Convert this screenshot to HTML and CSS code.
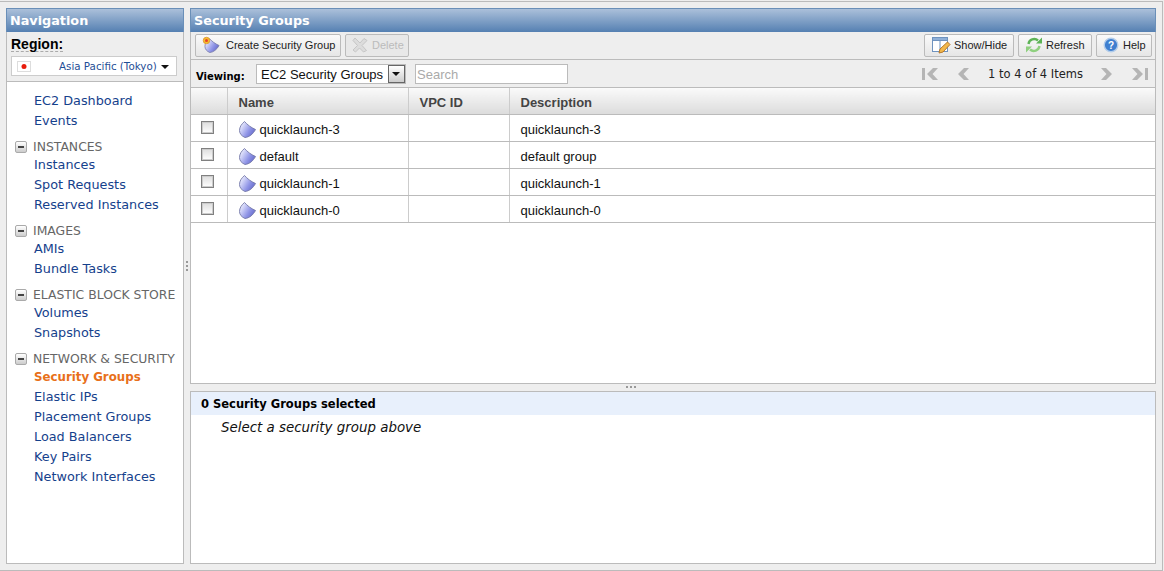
FILE: index.html
```html
<!DOCTYPE html>
<html lang="en">
<head>
<meta charset="utf-8">
<title>Security Groups</title>
<link rel="stylesheet" href="styles.css">
</head>
<body>
<svg class="defs" width="0" height="0" aria-hidden="true">
  <defs>
    <linearGradient id="sh" x1="0" y1=".2" x2="1" y2=".8">
      <stop offset="0" stop-color="#f4f5ff"/>
      <stop offset=".3" stop-color="#c3c6f4"/>
      <stop offset=".6" stop-color="#8f94e6"/>
      <stop offset="1" stop-color="#5d62c4"/>
    </linearGradient>
    <symbol id="shield" viewBox="0 0 17 17">
      <path d="M5.500 .5 C8 3.500 12 6.500 16.500 8.500 C14 13 10.500 16 6 16.500 C2.500 15 .5 12.500 .5 9.500 C.5 6 2.500 3 5.500 .5 Z" fill="url(#sh)" stroke="#7478a8" stroke-width=".9"/>
    </symbol>
  </defs>
</svg>
<div class="app">
  <aside class="nav">
    <h2 class="bar">Navigation</h2>
    <div class="region">
      <div class="region-label"><span>Region:</span></div>
      <div class="region-box">
        <svg class="flag" width="14" height="11" viewBox="0 0 14 11"><rect x=".5" y=".5" width="13" height="10" fill="#fff" stroke="#ddd"/><circle cx="7" cy="5.500" r="2.500" fill="#e81c0c"/></svg>
        <span class="region-name">Asia Pacific (Tokyo)</span>
        <span class="caret"></span>
      </div>
    </div>
    <div class="nav-list">
      <a class="nav-link">EC2 Dashboard</a>
      <a class="nav-link">Events</a>
      <div class="nav-head"><span class="minus"></span>INSTANCES</div>
      <a class="nav-link">Instances</a>
      <a class="nav-link">Spot Requests</a>
      <a class="nav-link">Reserved Instances</a>
      <div class="nav-head"><span class="minus"></span>IMAGES</div>
      <a class="nav-link">AMIs</a>
      <a class="nav-link">Bundle Tasks</a>
      <div class="nav-head"><span class="minus"></span>ELASTIC BLOCK STORE</div>
      <a class="nav-link">Volumes</a>
      <a class="nav-link">Snapshots</a>
      <div class="nav-head"><span class="minus"></span>NETWORK &amp; SECURITY</div>
      <a class="nav-link current">Security Groups</a>
      <a class="nav-link">Elastic IPs</a>
      <a class="nav-link">Placement Groups</a>
      <a class="nav-link">Load Balancers</a>
      <a class="nav-link">Key Pairs</a>
      <a class="nav-link">Network Interfaces</a>
    </div>
  </aside>
  <div class="vsplit"><span class="grip-v"></span></div>
  <main class="main">
    <h2 class="bar">Security Groups</h2>
    <div class="toolbar">
      <button class="btn create">
        <svg width="20" height="18" viewBox="0 0 20 18"><use href="#shield" x="3" y="2" width="16" height="15"/><circle cx="5.500" cy="4.500" r="3.200" fill="#f6c02c" stroke="#e09a35"/><circle cx="5.500" cy="4.500" r="1.500" fill="#e8402a"/></svg>
        Create Security Group
      </button>
      <button class="btn disabled">
        <svg width="16" height="16" viewBox="0 0 16 16"><path d="M3 1 L8 6 L12 1.500 L15 3.500 L10 8.500 L14.500 13.500 L11.500 15 L7.500 11 L3.500 15 L1 13 L5.500 8.500 L1 3.500 Z" fill="#dcdcdc" stroke="#c6c6c6"/></svg>
        Delete
      </button>
      <span class="spacer"></span>
      <button class="btn showhide">
        <svg width="20" height="18" viewBox="0 0 20 18"><rect x="1.500" y="1.500" width="15" height="14" fill="#fff" stroke="#6f93bf"/><rect x="1.500" y="1.500" width="15" height="3" fill="#8fb0d8" stroke="#6f93bf"/><path d="M9 4.500 V15.500" stroke="#6f93bf"/><path d="M8 17 L9 13 L16.500 6 L19 8.500 L12 16 Z" fill="#f2b84a" stroke="#b5772a"/></svg>
        Show/Hide
      </button>
      <button class="btn refresh">
        <svg width="18" height="18" viewBox="0 0 18 18"><path d="M3.500 8 A5.800 5.800 0 0 1 13 4.500" fill="none" stroke="#5db356" stroke-width="2.400"/><path d="M11 7.500 H17 V1.500 Z" fill="#5db356"/><path d="M14.500 10 A5.800 5.800 0 0 1 5 13.500" fill="none" stroke="#8fd07f" stroke-width="2.400"/><path d="M7 10.500 H1 V16.500 Z" fill="#8fd07f"/></svg>
        Refresh
      </button>
      <button class="btn help">
        <svg width="16" height="16" viewBox="0 0 16 16"><circle cx="8" cy="8" r="6.800" fill="#3f7fd0" stroke="#b3cdea" stroke-width="1.400"/><text x="8" y="11.500" class="qmark" text-anchor="middle">?</text></svg>
        Help
      </button>
    </div>
    <div class="filters">
      <label class="viewing">Viewing:</label>
      <div class="combo"><span class="combo-text">EC2 Security Groups</span><span class="combo-arrow"></span></div>
      <div class="search">Search</div>
      <span class="spacer"></span>
      <div class="pager">
        <svg width="18" height="14" viewBox="0 0 18 14"><rect x="1" y="1" width="3" height="12" fill="#b5b5b5"/><path d="M17 1 L12 1 L6 7 L12 13 L17 13 L11.500 7 Z" fill="#b5b5b5"/></svg>
        <svg class="pg-prev" width="13" height="14" viewBox="0 0 13 14"><path d="M12 1 L7 1 L1 7 L7 13 L12 13 L6.500 7 Z" fill="#b5b5b5"/></svg>
        <span class="pg-text">1 to 4 of 4 Items</span>
        <svg class="pg-next" width="13" height="14" viewBox="0 0 13 14"><path d="M1 1 L6 1 L12 7 L6 13 L1 13 L6.500 7 Z" fill="#b5b5b5"/></svg>
        <svg class="pg-last" width="18" height="14" viewBox="0 0 18 14"><path d="M1 1 L6 1 L12 7 L6 13 L1 13 L6.500 7 Z" fill="#b5b5b5"/><rect x="14" y="1" width="3" height="12" fill="#b5b5b5"/></svg>
      </div>
    </div>
    <div class="grid-wrap">
      <table class="grid">
        <colgroup><col class="c-check"><col class="c-name"><col class="c-vpc"><col></colgroup>
        <thead><tr><th></th><th>Name</th><th>VPC ID</th><th>Description</th></tr></thead>
        <tbody>
          <tr><td class="chk"><span class="box"></span></td><td><span class="cell-name"><svg class="sg" width="17" height="17"><use href="#shield"/></svg>quicklaunch-3</span></td><td></td><td>quicklaunch-3</td></tr>
          <tr><td class="chk"><span class="box"></span></td><td><span class="cell-name"><svg class="sg" width="17" height="17"><use href="#shield"/></svg>default</span></td><td></td><td>default group</td></tr>
          <tr><td class="chk"><span class="box"></span></td><td><span class="cell-name"><svg class="sg" width="17" height="17"><use href="#shield"/></svg>quicklaunch-1</span></td><td></td><td>quicklaunch-1</td></tr>
          <tr><td class="chk"><span class="box"></span></td><td><span class="cell-name"><svg class="sg" width="17" height="17"><use href="#shield"/></svg>quicklaunch-0</span></td><td></td><td>quicklaunch-0</td></tr>
        </tbody>
      </table>
    </div>
    <div class="hsplit"><span class="grip-h"></span></div>
    <section class="detail">
      <div class="detail-head">0 Security Groups selected</div>
      <div class="detail-body">Select a security group above</div>
    </section>
  </main>
</div>
</body>
</html>
```
FILE: styles.css
```css
* { box-sizing: border-box; }
html, body { margin: 0; height: 100%; }
body { background: #eee; overflow: hidden; font-family: "Liberation Sans", Arial, sans-serif; }
.defs { position: absolute; }
.app {
  width: 1163px;
  height: 570px;
  margin-top: 1px;
  border-top: 1px solid #bbb;
  border-bottom: 1px solid #bbb;
  border-right: 1px solid #bbb;
  padding: 6px;
  display: flex;
}
.bar {
  margin: 0;
  height: 24px;
  padding-left: 3px;
  font: bold 12.800px/23px "DejaVu Sans", Verdana, sans-serif;
  color: #fff;
  background: linear-gradient(#abc0da, #5580b2);
  border: 1px solid #6a8fb8;
  border-bottom: 0;
}
.nav { width: 178px; display: flex; flex-direction: column; flex: none; }
.region { height: 49px; border-left: 1px solid #bbb; border-right: 1px solid #bbb; padding: 5px 6px 0 4px; }
.region-label { font: bold 14px/15px "Liberation Sans", Arial, sans-serif; color: #000; height: 19px; }
.region-label span { display: inline-block; height: 15px; border-bottom: 1px dashed #aaa; }
.region-box {
  height: 20px; background: #fff; border: 1px solid #ccc; display: flex; align-items: center;
  padding-left: 5px; color: #1f4e96;
}
.region-name { margin-left: 28px; font: 10.300px "DejaVu Sans", Verdana, sans-serif; white-space: nowrap; }
.flag { flex: none; }
.caret { margin-left: 4px; border: 4px solid transparent; border-top-color: #111; border-bottom: 0; margin-top: 2px; }
.nav-list {
  flex: 1; background: #fff; border: 1px solid #bbb;
  padding-top: 9px; display: flex; flex-direction: column;
}
.nav-link { display: block; height: 20px; padding-left: 27px; font: 12.800px/19px "DejaVu Sans", Verdana, sans-serif; color: #15418c; white-space: nowrap; }
.nav-link.current { color: #e8701a; font-weight: bold; font-size: 11.800px; line-height: 21px; }
.nav-head {
  height: 17px; margin-top: 7px; display: flex; align-items: center;
  padding-left: 8px; font: 12.400px/17px "DejaVu Sans", Verdana, sans-serif; color: #666; white-space: nowrap;
}
.minus {
  width: 12px; height: 12px; margin-right: 6px; flex: none; position: relative;
  border: 1px solid #aaa; border-radius: 2px; background: linear-gradient(#fff, #ccc);
}
.minus::after { content: ""; position: absolute; left: 2px; top: 4px; width: 6px; height: 2px; background: #444; }
.vsplit { width: 6px; flex: none; display: flex; align-items: center; justify-content: center; }
.grip-v { width: 2px; height: 11px; background: repeating-linear-gradient(#999 0 2px, transparent 2px 4px); margin-top: -40px; }
.main { flex: 1; min-width: 0; display: flex; flex-direction: column; }
.toolbar {
  height: 28px; display: flex; align-items: flex-start; gap: 4px; padding: 2px 3px 0 4px;
  border-left: 1px solid #bbb; border-right: 1px solid #bbb; border-bottom: 1px solid #bbb; background: #eee;
}
.spacer { flex: 1; }
.btn {
  height: 23px; padding: 0 6px 2px; display: flex; align-items: center; gap: 4px;
  background: linear-gradient(#fafafa, #e6e6e6); border: 1px solid #bbb; border-radius: 2px;
  font: 11px "Liberation Sans", Arial, sans-serif; color: #222; white-space: nowrap;
}
.btn svg { flex: none; }
.btn.disabled { color: #bbb; background: #e8e8e8; }
.btn.create { width: 146px; padding-left: 5px; gap: 5px; }
.btn.disabled { width: 64px; }
.btn.showhide { width: 90px; gap: 3px; }
.btn.refresh { width: 74px; gap: 3px; }
.btn.help { width: 56px; gap: 4px; }
.qmark { font: bold 10px "Liberation Sans", sans-serif; fill: #fff; }
.filters {
  height: 27px; display: flex; align-items: center; padding: 0 5px;
  border-left: 1px solid #bbb; border-right: 1px solid #bbb; background: #eee;
}
.viewing { font: bold 10px "DejaVu Sans", Verdana, sans-serif; color: #000; width: 60px; margin-top: 6px; }
.combo {
  width: 150px; height: 20px; background: #fff; border: 1px solid #bbb; display: flex; align-items: center;
  justify-content: space-between; padding-left: 4px; font: 13px "Liberation Sans", Arial, sans-serif; color: #111;
}
.combo-text { white-space: nowrap; padding-top: 1px; }
.combo-arrow {
  flex: none; width: 17px; height: 18px; background: linear-gradient(#fff, #ccc); border: 1px solid #666; position: relative;
}
.combo-arrow::after {
  content: ""; position: absolute; left: 3px; top: 6px; border: 4px solid transparent; border-top-color: #111; border-bottom: 0;
}
.search {
  width: 153px; height: 20px; margin-left: 9px; background: #fff; border: 1px solid #bbb;
  font: 13px/19px "Liberation Sans", Arial, sans-serif; color: #aaa; padding-left: 1px;
}
.pager { display: flex; align-items: center; margin-right: 1px; }
.pg-prev { margin-left: 18px; }
.pg-text { margin: 0 17px 0 18px; font: 11.500px "DejaVu Sans", Verdana, sans-serif; color: #222; white-space: nowrap; }
.pg-last { margin-left: 18px; }
.grid-wrap { flex: 1; min-height: 0; background: #fff; border: 1px solid #bbb; }
.grid { width: 100%; border-collapse: collapse; table-layout: fixed; }
.c-check { width: 36px; }
.c-name { width: 181px; }
.c-vpc { width: 101px; }
.grid th {
  height: 26px; padding: 4px 0 0 11px; text-align: left; font: bold 13px "Liberation Sans", Arial, sans-serif; color: #444;
  background: linear-gradient(#fafafa, #dcdcdc); border-right: 1px solid #ccc; border-bottom: 1px solid #bbb;
}
.grid td {
  height: 27px; padding: 4px 0 0 11px; font: 13px "Liberation Sans", Arial, sans-serif; color: #111;
  border-right: 1px solid #ccc; border-bottom: 1px solid #bbb;
}
.grid th:last-child, .grid td:last-child { border-right: 0; }
.grid td.chk { vertical-align: top; padding: 0 0 0 10px; }
.box {
  display: block; width: 13px; height: 13px; margin-top: 6px; border: 1px solid #808080; box-shadow: inset 0 0 0 1px #ccc;
  background: linear-gradient(#ddd, #fff);
}
.cell-name { display: flex; align-items: center; gap: 4px; white-space: nowrap; }
.sg { flex: none; }
.hsplit { height: 7px; flex: none; display: flex; align-items: flex-start; padding: 2px 0 0 436px; }
.grip-h { width: 11px; height: 2px; background: repeating-linear-gradient(90deg, #999 0 2px, transparent 2px 4px); }
.detail { height: 173px; flex: none; background: #fff; border: 1px solid #bbb; }
.detail-head { height: 23px; background: #e8f0fc; padding-left: 10px; font: bold 11.500px/25px "DejaVu Sans", Verdana, sans-serif; color: #000; }
.detail-body { padding: 3px 0 0 30px; font: italic 13.400px/20px "DejaVu Sans", Verdana, sans-serif; color: #111; }
```
